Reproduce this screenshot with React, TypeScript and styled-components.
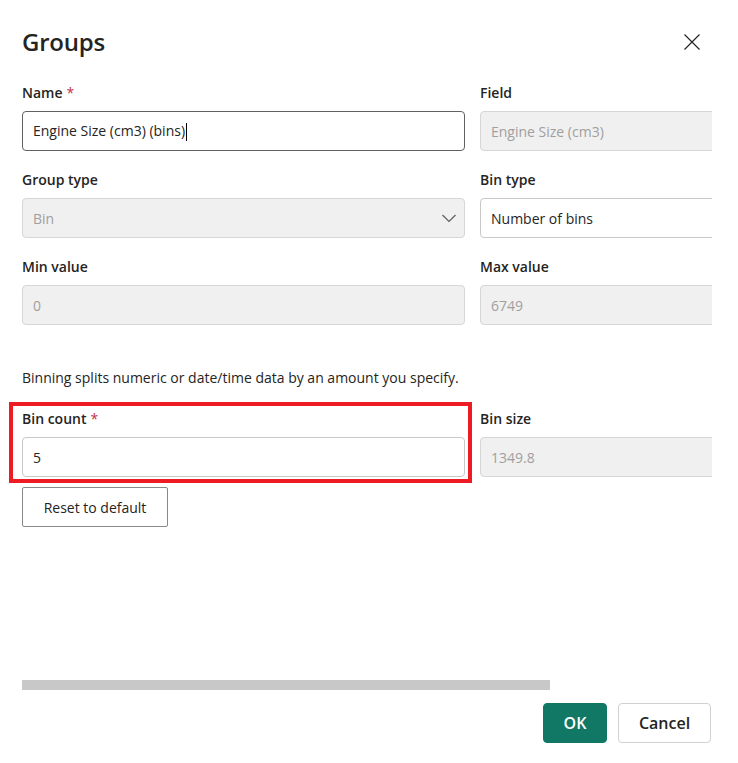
import React from 'react'
import styled, { createGlobalStyle } from 'styled-components'

const GlobalStyle = createGlobalStyle`
  html, body {
    margin: 0;
    padding: 0;
    background: #ffffff;
  }
  body {
    font-family: 'Open Sans', 'Noto Sans', 'Liberation Sans', sans-serif;
    color: #252423;
  }
`

const Dialog = styled.div`
  width: 738px;
  height: 763px;
  box-sizing: border-box;
  display: flex;
  flex-direction: column;
  background: #fff;
`

const Header = styled.div`
  display: flex;
  justify-content: space-between;
  align-items: center;
  padding: 26px 38px 0 22px;
  height: 32px;
`

const Title = styled.h1`
  margin: 0;
  font-size: 24px;
  line-height: 32px;
  font-weight: 600;
  letter-spacing: -0.2px;
  color: #252423;
`

const CloseButton = styled.button`
  border: none;
  background: transparent;
  padding: 0;
  width: 16px;
  height: 16px;
  display: flex;
  cursor: pointer;
`

const ScrollArea = styled.div`
  margin-top: 25px;
  width: 712px;
  height: 597px;
  padding-left: 22px;
  box-sizing: border-box;
  overflow: hidden;
`

const Grid = styled.div`
  width: 901px;
  display: grid;
  grid-template-columns: 443px 443px;
  column-gap: 15px;
`

const Field = styled.div<{ $highlight?: boolean }>`
  position: relative;
  display: flex;
  flex-direction: column;
  margin-bottom: 19px;
  ${p => p.$highlight && `
    &::after {
      content: '';
      position: absolute;
      left: -13px;
      top: -7px;
      right: -7px;
      bottom: -6px;
      border: 4px solid #ed1c24;
      pointer-events: none;
    }
  `}
`

const Label = styled.label`
  font-size: 14px;
  line-height: 20px;
  font-weight: 600;
  color: #252423;
  margin-bottom: 8px;
`

const Required = styled.span`
  color: #c4314b;
  margin-left: 4px;
  font-weight: 400;
`

const InputBox = styled.div<{ $disabled?: boolean; $focused?: boolean }>`
  height: 40px;
  box-sizing: border-box;
  display: flex;
  align-items: center;
  justify-content: space-between;
  padding: 0 7px 0 10px;
  border-radius: 4px;
  border: 1px solid ${p => (p.$disabled ? '#d6d6d6' : p.$focused ? '#616161' : '#c8c8c8')};
  background: ${p => (p.$disabled ? '#f0f0f0' : '#ffffff')};
  color: ${p => (p.$disabled ? '#a19f9d' : '#252423')};
  font-size: 14px;
`

const Caret = styled.span`
  display: inline-block;
  width: 1px;
  height: 18px;
  background: #000;
  vertical-align: middle;
  margin-left: 1px;
`

const Hint = styled.p`
  grid-column: 1 / span 2;
  margin: 24px 0 21px;
  font-size: 14px;
  line-height: 20px;
  color: #252423;
`

const ResetButton = styled.button`
  grid-column: 1;
  justify-self: start;
  margin-top: -9px;
  height: 40px;
  width: 146px;
  border: 1px solid #8a8886;
  border-radius: 2px;
  background: #fff;
  font-family: inherit;
  font-size: 14px;
  color: #252423;
`

const ScrollTrack = styled.div`
  margin-left: 22px;
  width: 690px;
  height: 10px;
`

const ScrollThumb = styled.div`
  height: 100%;
  background: #c8c8c8;
`

const Footer = styled.div`
  display: flex;
  justify-content: flex-end;
  gap: 11px;
  padding: 13px 27px 0 0;
`

const ActionButton = styled.button<{ $primary?: boolean }>`
  height: 40px;
  min-width: ${p => (p.$primary ? '64px' : '93px')};
  border-radius: 4px;
  font-family: inherit;
  font-size: 16px;
  font-weight: 600;
  border: 1px solid ${p => (p.$primary ? '#117865' : '#d1d1d1')};
  background: ${p => (p.$primary ? '#117865' : '#ffffff')};
  color: ${p => (p.$primary ? '#ffffff' : '#252423')};
`

const Chevron = () => (
  <svg width="16" height="16" viewBox="0 0 16 16" fill="none">
    <path d="M1.5 5 L8 11.5 L14.5 5" stroke="#605e5c" strokeWidth="1.2" />
  </svg>
)

const CloseIcon = () => (
  <svg width="16" height="16" viewBox="0 0 16 16" fill="none">
    <path d="M0.5 0.5 L15.5 15.5 M15.5 0.5 L0.5 15.5" stroke="#252423" strokeWidth="1.2" />
  </svg>
)

const contentWidth = 901
const visibleWidth = 690

export default function App() {
  return (
    <>
      <GlobalStyle />
      <Dialog>
        <Header>
          <Title>Groups</Title>
          <CloseButton aria-label="Close">
            <CloseIcon />
          </CloseButton>
        </Header>

        <ScrollArea>
          <Grid>
            <Field>
              <Label>Name<Required>*</Required></Label>
              <InputBox $focused>
                <span>Engine Size (cm3) (bins)<Caret /></span>
              </InputBox>
            </Field>
            <Field>
              <Label>Field</Label>
              <InputBox $disabled>Engine Size (cm3)</InputBox>
            </Field>

            <Field>
              <Label>Group type</Label>
              <InputBox $disabled>
                <span>Bin</span>
                <Chevron />
              </InputBox>
            </Field>
            <Field>
              <Label>Bin type</Label>
              <InputBox>Number of bins</InputBox>
            </Field>

            <Field>
              <Label>Min value</Label>
              <InputBox $disabled>0</InputBox>
            </Field>
            <Field>
              <Label>Max value</Label>
              <InputBox $disabled>6749</InputBox>
            </Field>

            <Hint>Binning splits numeric or date/time data by an amount you specify.</Hint>

            <Field $highlight>
              <Label>Bin count<Required>*</Required></Label>
              <InputBox>5</InputBox>
            </Field>
            <Field>
              <Label>Bin size</Label>
              <InputBox $disabled>1349.8</InputBox>
            </Field>

            <ResetButton>Reset to default</ResetButton>
          </Grid>
        </ScrollArea>

        <ScrollTrack>
          <ScrollThumb style={{ width: `${Math.round((visibleWidth / contentWidth) * visibleWidth)}px` }} />
        </ScrollTrack>

        <Footer>
          <ActionButton $primary>OK</ActionButton>
          <ActionButton>Cancel</ActionButton>
        </Footer>
      </Dialog>
    </>
  )
}
